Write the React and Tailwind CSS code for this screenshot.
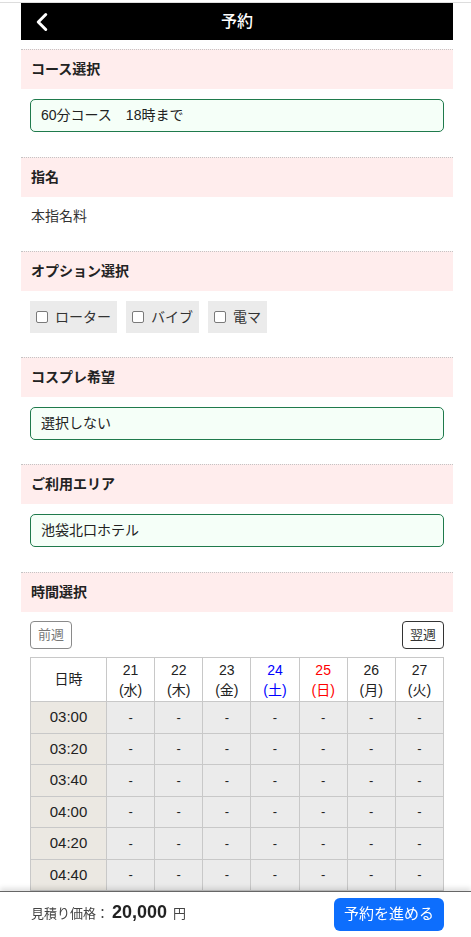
import { ChevronLeft } from "lucide-react";

const days = [
  { d: "21", w: "(水)", c: "text-[#222]" },
  { d: "22", w: "(木)", c: "text-[#222]" },
  { d: "23", w: "(金)", c: "text-[#222]" },
  { d: "24", w: "(土)", c: "text-[#0000ff]" },
  { d: "25", w: "(日)", c: "text-[#ff0000]" },
  { d: "26", w: "(月)", c: "text-[#222]" },
  { d: "27", w: "(火)", c: "text-[#222]" },
];

const times = [
  "03:00", "03:20", "03:40", "04:00", "04:20", "04:40",
  "05:00", "05:20",
];

const options = ["ローター", "バイブ", "電マ"];

const SectionHead = ({ children }) => (
  <div className="h-[40px] border-t border-dotted border-[#c4c4c4] bg-[#ffeded] px-[10px] flex items-center text-[14px] font-bold text-[#222]">
    {children}
  </div>
);

const Field = ({ children }) => (
  <div className="mx-[9px] mt-[10px] h-[33px] rounded-[5px] border border-[#1f7a4c] bg-[#f5fff8] px-[10px] flex items-center text-[14px] text-[#222]">
    {children}
  </div>
);

export default function App() {
  return (
    <div className="min-h-screen bg-white pt-[2px] font-['Liberation_Sans','Noto_Sans_CJK_JP',sans-serif]">
      <div className="border-t border-[#dddddd]">
        <div className="ml-[21px] w-[432px] pb-[46px]">

          {/* HEADER */}
          <div className="h-[37px] bg-black grid grid-cols-[48px_1fr_48px] items-center text-white">
            <div className="flex items-center pl-[6px]">
              <ChevronLeft size={30} strokeWidth={2.4} />
            </div>
            <div className="text-center text-[16px] font-medium">予約</div>
            <div />
          </div>

          {/* コース選択 */}
          <div className="mt-[9px] pb-[25px]">
            <SectionHead>コース選択</SectionHead>
            <Field>60分コース　18時まで</Field>
          </div>

          {/* 指名 */}
          <div className="pb-[25px]">
            <SectionHead>指名</SectionHead>
            <div className="mt-[9px] h-[20px] px-[10px] text-[14px] leading-[20px] text-[#333]">
              本指名料
            </div>
          </div>

          {/* オプション選択 */}
          <div className="pb-[24px]">
            <SectionHead>オプション選択</SectionHead>
            <div className="mt-[10px] px-[9px] flex gap-[9px]">
              {options.map((o) => (
                <label
                  key={o}
                  className="h-[32px] bg-[#ebebeb] pl-[6px] pr-[6px] flex items-center gap-[7px] text-[14px] text-[#333]"
                >
                  <span className="w-[12px] h-[12px] rounded-[2px] border border-[#7a7a7a] bg-white" />
                  {o}
                </label>
              ))}
            </div>
          </div>

          {/* コスプレ希望 */}
          <div className="pb-[24px]">
            <SectionHead>コスプレ希望</SectionHead>
            <Field>選択しない</Field>
          </div>

          {/* ご利用エリア */}
          <div className="pb-[25px]">
            <SectionHead>ご利用エリア</SectionHead>
            <Field>池袋北口ホテル</Field>
          </div>

          {/* 時間選択 */}
          <div>
            <SectionHead>時間選択</SectionHead>
            <div className="mt-[9px] px-[9px] flex justify-between">
              <button className="h-[28px] w-[42px] rounded-[4px] border border-[#8a8a8a] text-[13px] text-[#777] bg-white">
                前週
              </button>
              <button className="h-[28px] w-[42px] rounded-[4px] border border-[#333] text-[13px] text-[#333] bg-white">
                翌週
              </button>
            </div>

            <div className="mt-[8px] mx-[9px] grid grid-cols-[75px_repeat(7,1fr)] gap-px bg-[#c8c8c8] border border-[#c8c8c8]">
              <div className="h-[43px] bg-white flex items-center justify-center text-[14px] text-[#222]">
                日時
              </div>
              {days.map((d) => (
                <div
                  key={d.d}
                  className={`h-[43px] bg-white flex flex-col items-center justify-center text-[14px] leading-[20px] ${d.c}`}
                >
                  <span>{d.d}</span>
                  <span>{d.w}</span>
                </div>
              ))}

              {times.map((t) => (
                <div key={t} className="contents">
                  <div className="h-[30.5px] bg-[#ebe8e2] flex items-center justify-center text-[15px] text-[#222]">
                    {t}
                  </div>
                  {days.map((d) => (
                    <div
                      key={d.d}
                      className="h-[30.5px] bg-[#ebebeb] flex items-center justify-center text-[13px] text-[#222]"
                    >
                      -
                    </div>
                  ))}
                </div>
              ))}
            </div>
          </div>
        </div>
      </div>

      {/* FOOTER */}
      <div className="fixed bottom-0 left-0 right-0 h-[46px] bg-white border-t border-[#666] shadow-[0_-3px_5px_rgba(0,0,0,0.12)]">
        <div className="ml-[21px] w-[432px] h-full pl-[10px] pr-[9px] flex items-center justify-between">
          <div className="-mt-[5px] flex items-baseline text-[#444]">
            <span className="text-[13px]">見積り価格：</span>
            <span className="ml-[3px] text-[18px] font-bold text-[#222]">20,000</span>
            <span className="ml-[6px] text-[13px]">円</span>
          </div>
          <button className="h-[33px] w-[110px] rounded-[6px] bg-[#0d6efd] text-white text-[15px]">
            予約を進める
          </button>
        </div>
      </div>
    </div>
  );
}
